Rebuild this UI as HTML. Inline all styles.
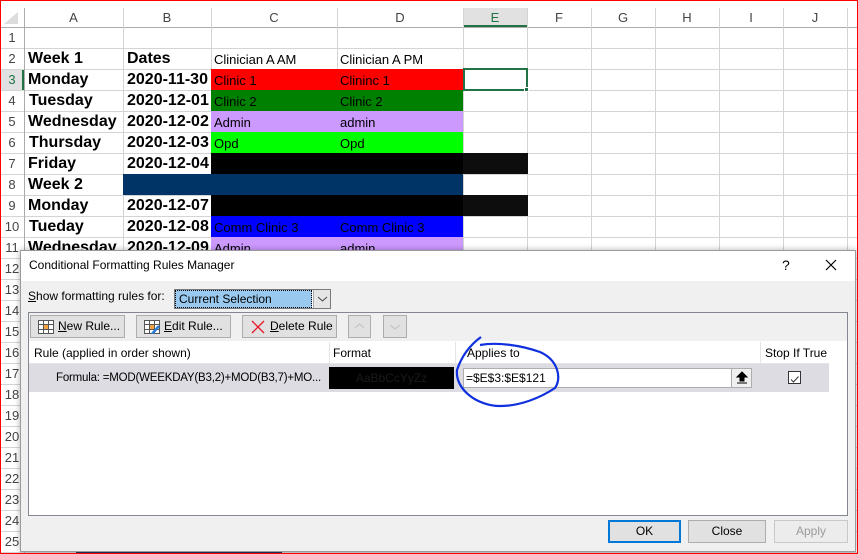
<!DOCTYPE html>
<html><head><meta charset="utf-8"><style>
*{margin:0;padding:0;box-sizing:border-box}
body{width:858px;height:554px;overflow:hidden;background:#fff;position:relative;font-family:"Liberation Sans",sans-serif}
.a{position:absolute}
.vl{position:absolute;top:8px;width:1px;height:546px;background:#d4d4d4}
.hl{position:absolute;left:0;width:858px;height:1px;background:#d4d4d4}
.ch{position:absolute;top:8px;height:19px;font-size:13px;color:#444;text-align:center;line-height:20px}
.rh{position:absolute;left:0;width:24px;font-size:13px;color:#444;text-align:center;line-height:21px;height:21px}
.b{position:absolute;font-weight:bold;font-size:16px;line-height:21px;color:#000}
.t{position:absolute;font-size:13px;line-height:21px;color:#000}
.f{position:absolute;height:21px}
.btn{position:absolute;height:23px;border:1px solid #adadad;background:#e1e1e1;font-size:12px;line-height:21px;color:#000}
.dt{font-family:"Liberation Sans",sans-serif;font-size:12px;color:#000}
</style></head><body>
<div class="a" style="left:463px;top:8px;width:64px;height:19px;background:#e1e1e1;border-bottom:2px solid #217346"></div>
<div class="a" style="left:0;top:69px;width:24px;height:21px;background:#e1e1e1;border-right:2px solid #217346"></div>
<div class="a" style="left:4px;top:12px;width:0;height:0;border-left:14px solid transparent;border-bottom:12px solid #dcdcdc"></div>
<div class="hl" style="top:27px;background:#ababab"></div>
<div class="hl" style="top:48px"></div><div class="hl" style="top:69px"></div><div class="hl" style="top:90px"></div><div class="hl" style="top:111px"></div><div class="hl" style="top:132px"></div><div class="hl" style="top:153px"></div><div class="hl" style="top:174px"></div><div class="hl" style="top:195px"></div><div class="hl" style="top:216px"></div><div class="hl" style="top:237px"></div><div class="hl" style="top:258px"></div><div class="hl" style="top:279px"></div><div class="hl" style="top:300px"></div><div class="hl" style="top:321px"></div><div class="hl" style="top:342px"></div><div class="hl" style="top:363px"></div><div class="hl" style="top:384px"></div><div class="hl" style="top:405px"></div><div class="hl" style="top:426px"></div><div class="hl" style="top:447px"></div><div class="hl" style="top:468px"></div><div class="hl" style="top:489px"></div><div class="hl" style="top:510px"></div><div class="hl" style="top:531px"></div><div class="hl" style="top:552px"></div>
<div class="vl" style="left:24px;background:#ababab"></div><div class="vl" style="left:123px"></div><div class="vl" style="left:211px"></div><div class="vl" style="left:337px"></div><div class="vl" style="left:463px"></div><div class="vl" style="left:527px"></div><div class="vl" style="left:591px"></div><div class="vl" style="left:655px"></div><div class="vl" style="left:719px"></div><div class="vl" style="left:783px"></div><div class="vl" style="left:847px"></div>
<div class="ch" style="left:24px;width:99px">A</div><div class="ch" style="left:123px;width:88px">B</div><div class="ch" style="left:211px;width:126px">C</div><div class="ch" style="left:337px;width:126px">D</div><div class="ch" style="left:463px;width:64px;color:#217346">E</div><div class="ch" style="left:527px;width:64px">F</div><div class="ch" style="left:591px;width:64px">G</div><div class="ch" style="left:655px;width:64px">H</div><div class="ch" style="left:719px;width:64px">I</div><div class="ch" style="left:783px;width:64px">J</div>
<div class="rh" style="top:27px">1</div><div class="rh" style="top:48px">2</div><div class="rh" style="top:69px;color:#217346">3</div><div class="rh" style="top:90px">4</div><div class="rh" style="top:111px">5</div><div class="rh" style="top:132px">6</div><div class="rh" style="top:153px">7</div><div class="rh" style="top:174px">8</div><div class="rh" style="top:195px">9</div><div class="rh" style="top:216px">10</div><div class="rh" style="top:237px">11</div><div class="rh" style="top:258px">12</div><div class="rh" style="top:279px">13</div><div class="rh" style="top:300px">14</div><div class="rh" style="top:321px">15</div><div class="rh" style="top:342px">16</div><div class="rh" style="top:363px">17</div><div class="rh" style="top:384px">18</div><div class="rh" style="top:405px">19</div><div class="rh" style="top:426px">20</div><div class="rh" style="top:447px">21</div><div class="rh" style="top:468px">22</div><div class="rh" style="top:489px">23</div><div class="rh" style="top:510px">24</div><div class="rh" style="top:531px">25</div>
<div class="f" style="left:211px;top:69px;width:252px;background:#f00"></div>
<div class="f" style="left:211px;top:90px;width:252px;background:#008000"></div>
<div class="f" style="left:211px;top:111px;width:252px;background:#cc99ff"></div>
<div class="f" style="left:211px;top:132px;width:252px;background:#00ff00"></div>
<div class="f" style="left:211px;top:153px;width:252px;background:#000"></div>
<div class="f" style="left:463px;top:153px;width:65px;background:#0d0d0d"></div>
<div class="f" style="left:123px;top:174px;width:340px;background:#003366"></div>
<div class="f" style="left:211px;top:195px;width:252px;background:#000"></div>
<div class="f" style="left:463px;top:195px;width:65px;background:#0d0d0d"></div>
<div class="f" style="left:211px;top:216px;width:252px;background:#0000ff"></div>
<div class="f" style="left:211px;top:237px;width:252px;background:#cc99ff"></div>
<div class="a" style="left:463px;top:68px;width:65px;height:23px;border:2px solid #217346"></div>
<div class="a" style="left:524px;top:87px;width:5px;height:5px;background:#217346;border:1px solid #fff"></div>
<div class="b" style="left:28px;top:48px">Week 1</div><div class="b" style="left:127px;top:48px">Dates</div>
<div class="t" style="left:214px;top:49px">Clinician A AM</div><div class="t" style="left:340px;top:49px">Clinician A PM</div>
<div class="b" style="left:28px;top:69px">Monday</div><div class="b" style="left:127px;top:69px">2020-11-30</div><div class="t" style="left:214px;top:70px">Clinic 1</div><div class="t" style="left:340px;top:70px">Clininc 1</div>
<div class="b" style="left:29px;top:90px">Tuesday</div><div class="b" style="left:127px;top:90px">2020-12-01</div><div class="t" style="left:214px;top:91px">Clinic 2</div><div class="t" style="left:340px;top:91px">Clinic 2</div>
<div class="b" style="left:28px;top:111px">Wednesday</div><div class="b" style="left:127px;top:111px">2020-12-02</div><div class="t" style="left:214px;top:112px">Admin</div><div class="t" style="left:340px;top:112px">admin</div>
<div class="b" style="left:29px;top:132px">Thursday</div><div class="b" style="left:127px;top:132px">2020-12-03</div><div class="t" style="left:214px;top:133px">Opd</div><div class="t" style="left:340px;top:133px">Opd</div>
<div class="b" style="left:28px;top:153px">Friday</div><div class="b" style="left:127px;top:153px">2020-12-04</div>
<div class="b" style="left:28px;top:174px">Week 2</div>
<div class="b" style="left:28px;top:195px">Monday</div><div class="b" style="left:127px;top:195px">2020-12-07</div>
<div class="b" style="left:29px;top:216px">Tueday</div><div class="b" style="left:127px;top:216px">2020-12-08</div><div class="t" style="left:214px;top:217px">Comm Clinic 3</div><div class="t" style="left:340px;top:217px">Comm Clinic 3</div>
<div class="b" style="left:28px;top:237px">Wednesday</div><div class="b" style="left:127px;top:237px">2020-12-09</div><div class="t" style="left:214px;top:238px">Admin</div><div class="t" style="left:340px;top:238px">admin</div>
<div class="a" style="left:76px;top:550px;width:206px;height:4px;background:#1f3864"></div>
<div class="a" style="left:20px;top:250px;width:836px;height:302px;background:#f0f0f0;border:1px solid #9a9a9a;box-shadow:0 0 6px rgba(0,0,0,.3)"></div>
<div class="a" style="left:21px;top:251px;width:834px;height:30px;background:#fff"></div>
<div class="a dt" style="left:29px;top:258px;font-size:12px">Conditional Formatting Rules Manager</div>
<div class="a dt" style="left:782px;top:257px;font-size:14px">?</div>
<svg class="a" style="left:825px;top:259px" width="12" height="12"><path d="M1 1L11 11M11 1L1 11" stroke="#000" stroke-width="1.2"/></svg>
<div class="a dt" style="left:28px;top:289px"><u>S</u>how formatting rules for:</div>
<div class="a" style="left:174px;top:289px;width:157px;height:20px;border:1px solid #7a7a7a;background:#fff"></div>
<div class="a dt" style="left:175px;top:290px;width:137px;height:18px;background:#99c9ef;border:1px dotted #000;padding-left:3px;line-height:16px">Current Selection</div>
<div class="a" style="left:313px;top:290px;width:17px;height:18px;background:#e5e5e5;border-left:1px solid #adadad"><svg width="17" height="18"><path d="M4 7L8.5 11L13 7" fill="none" stroke="#444"/></svg></div>
<div class="a" style="left:28px;top:312px;width:820px;height:204px;border:1px solid #828790;background:#fff"></div>
<div class="a" style="left:29px;top:313px;width:818px;height:28px;background:#f0f0f0"></div>
<div class="btn" style="left:30px;top:315px;width:95px"><svg style="position:absolute;left:7px;top:4px" width="16" height="14"><rect x=".5" y=".5" width="15" height="13" fill="#fff" stroke="#555"/><rect x="5" y="4" width="6" height="5" fill="#f7a440"/><path d="M5.5 0V14M10.5 0V14M0 4.5H16M0 9.5H16" stroke="#555"/></svg><span style="position:absolute;left:27px"><u>N</u>ew Rule...</span></div>
<div class="btn" style="left:136px;top:315px;width:95px"><svg style="position:absolute;left:7px;top:4px" width="16" height="14"><rect x=".5" y=".5" width="15" height="13" fill="#fff" stroke="#555"/><rect x="5" y="4" width="6" height="5" fill="#f7a440"/><path d="M5.5 0V14M10.5 0V14M0 4.5H16M0 9.5H16" stroke="#555"/><path d="M8 14L15 6" stroke="#2b7cd3" stroke-width="2.5"/></svg><span style="position:absolute;left:27px"><u>E</u>dit Rule...</span></div>
<div class="btn" style="left:242px;top:315px;width:95px"><svg style="position:absolute;left:8px;top:4px" width="14" height="14"><path d="M1 1L13 13M13 1L1 13" stroke="#e81123" stroke-width="1.3"/></svg><span style="position:absolute;left:27px"><u>D</u>elete Rule</span></div>
<div class="btn" style="left:348px;top:315px;width:23px"><svg width="21" height="21"><path d="M6 12L10.5 8L15 12" fill="none" stroke="#c0c0c0"/></svg></div>
<div class="btn" style="left:383px;top:315px;width:24px"><svg width="22" height="21"><path d="M6 9L11 13L16 9" fill="none" stroke="#c0c0c0"/></svg></div>
<div class="a" style="left:29px;top:342px;width:800px;height:22px;background:#fff;border-bottom:1px solid #e5e5e5"></div>
<div class="a" style="left:329px;top:342px;width:1px;height:21px;background:#e5e5e5"></div>
<div class="a" style="left:455px;top:342px;width:1px;height:21px;background:#e5e5e5"></div>
<div class="a" style="left:760px;top:342px;width:1px;height:21px;background:#e5e5e5"></div>
<div class="a dt" style="left:34px;top:346px">Rule (applied in order shown)</div>
<div class="a dt" style="left:333px;top:346px">Format</div>
<div class="a dt" style="left:467px;top:346px">Applies to</div>
<div class="a dt" style="left:765px;top:346px">Stop If True</div>
<div class="a" style="left:29px;top:364px;width:800px;height:28px;background:#dcdce2"></div>
<div class="a dt" style="left:56px;top:372px;font-size:11.5px;letter-spacing:-0.2px;white-space:nowrap">Formula: =MOD(WEEKDAY(B3,2)+MOD(B3,7)+MO...</div>
<div class="a" style="left:329px;top:367px;width:125px;height:22px;background:#000;color:#1a1a1a;font-size:12px;text-align:center;line-height:22px">AaBbCcYyZz</div>
<div class="a" style="left:463px;top:368px;width:289px;height:20px;background:#fff;border:1px solid #adadad"></div>
<div class="a dt" style="left:466px;top:371px">=$E$3:$E$121</div>
<div class="a" style="left:731px;top:369px;width:20px;height:18px;background:#f0f0f0;border-left:1px solid #adadad"><svg width="20" height="18"><path d="M10 3L5 8H8V12H12V8H15Z M5 14H15" fill="#000" stroke="#000" stroke-width="1"/></svg></div>
<div class="a" style="left:788px;top:371px;width:13px;height:13px;border:1px solid #333;background:#fff"><svg width="11" height="11"><path d="M2 5.5L4.5 8L9.5 2.5" fill="none" stroke="#333"/></svg></div>
<svg class="a" style="left:440px;top:330px" width="130" height="80" viewBox="440 330 130 80"><path d="M481 337 C470 345 462 355 457 370 C455 390 478 406 500 406 C520 406 540 398 555 388 C562 378 558 360 540 352 C520 345 497 342 480 345" fill="none" stroke="#1030e0" stroke-width="2.2"/></svg>
<div class="btn" style="left:608px;top:520px;width:73px;border:2px solid #0078d7;text-align:center;line-height:19px">OK</div>
<div class="btn" style="left:688px;top:520px;width:78px;text-align:center">Close</div>
<div class="btn" style="left:774px;top:520px;width:74px;text-align:center;color:#9a9a9a;background:#ececec;border-color:#c8c8c8">Apply</div>
<div class="a" style="left:0;top:0;width:858px;height:554px;border:1px solid #f00;pointer-events:none"></div>
</body></html>
